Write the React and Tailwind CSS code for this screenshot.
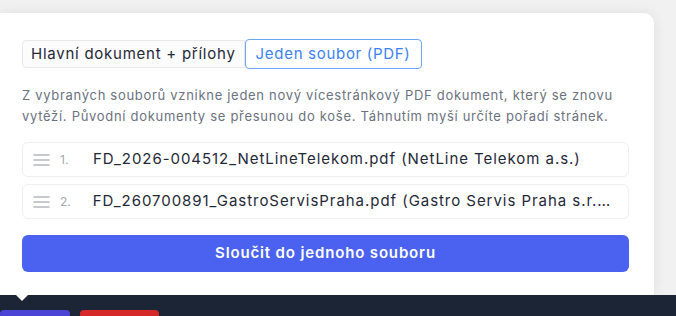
import React, { useState } from "react";

const files = [
  { name: "FD_2026-004512_NetLineTelekom.pdf", company: "NetLine Telekom a.s." },
  { name: "FD_260700891_GastroServisPraha.pdf", company: "Gastro Servis Praha s.r.o." },
];

function Grip() {
  return (
    <svg width="17" height="14" viewBox="0 0 17 14" className="shrink-0">
      <g stroke="#b4b8bf" strokeWidth="1.6" strokeLinecap="round">
        <line x1="1" y1="2" x2="16" y2="2" />
        <line x1="1" y1="7" x2="16" y2="7" />
        <line x1="1" y1="12" x2="16" y2="12" />
      </g>
    </svg>
  );
}

export default function App() {
  const [mode, setMode] = useState("pdf");

  return (
    <div
      className="relative w-[676px] h-[316px] overflow-hidden bg-[#f1f1f1] flex flex-col"
      style={{ fontFamily: "Inter, 'Noto Sans', sans-serif" }}
    >
      {/* popover area */}
      <div className="h-[295px] flex items-start">
        <div className="mt-[13px] w-[654px] h-[282px] bg-white rounded-tr-[10px] shadow-[0_0_14px_rgba(0,0,0,0.08)] pl-[22px] pr-[25px] pt-[26px]">
          {/* tabs */}
          <div className="flex items-center">
            <button
              onClick={() => setMode("main")}
              className={`h-[28px] px-[8px] text-[15px] tracking-[0.75px] border rounded-l-[4px] ${
                mode === "main"
                  ? "border-[#6aa7f7] text-[#3b82f6] bg-white"
                  : "border-[#e8e8ea] text-[#1f2937] bg-[#fcfcfc]"
              }`}
            >
              Hlavní dokument + přílohy
            </button>
            <button
              onClick={() => setMode("pdf")}
              className={`h-[30px] px-[10px] text-[15px] tracking-[0.7px] border rounded-[4px] ${
                mode === "pdf"
                  ? "border-[#6aa7f7] text-[#3b82f6] bg-white"
                  : "border-[#e8e8ea] text-[#1f2937] bg-[#fcfcfc]"
              }`}
            >
              Jeden soubor (PDF)
            </button>
          </div>

          {/* description */}
          <p className="mt-[16px] text-[13px] tracking-[0.7px] leading-[21px] text-[#6b7280] whitespace-nowrap">
            Z vybraných souborů vznikne jeden nový vícestránkový PDF dokument, který se znovu
            <br />
            vytěží. Původní dokumenty se přesunou do koše. Táhnutím myší určíte pořadí stránek.
          </p>

          {/* file list */}
          <div className="mt-[15px] flex flex-col gap-[7px]">
            {files.map((f, i) => (
              <div
                key={f.name}
                className="h-[35px] flex items-center border border-[#efeff1] rounded-[6px] pl-[10px] pr-[12px]"
              >
                <Grip />
                <span className="ml-[10px] w-[33px] text-[12px] text-[#a3a7ae]">{i + 1}.</span>
                <span className="truncate text-[15px] tracking-[0.95px] text-[#1f2937]">
                  {f.name} ({f.company})
                </span>
              </div>
            ))}
          </div>

          {/* submit */}
          <button className="mt-[16px] w-full h-[37px] rounded-[6px] bg-[#4a62ef] text-white text-[15px] tracking-[0.85px] font-semibold">
            Sloučit do jednoho souboru
          </button>
        </div>
      </div>

      {/* bottom toolbar */}
      <div className="flex-1 bg-[#1c2536] flex items-end gap-[10px]">
        <div className="w-[70px] h-[6px] bg-[#4b44d6] rounded-t-[4px]" />
        <div className="w-[79px] h-[6px] bg-[#d62828] rounded-t-[4px]" />
      </div>

      {/* popover arrow */}
      <div className="absolute left-[15px] top-[294px] w-0 h-0 border-l-[7px] border-r-[7px] border-t-[7px] border-l-transparent border-r-transparent border-t-white" />
    </div>
  );
}
